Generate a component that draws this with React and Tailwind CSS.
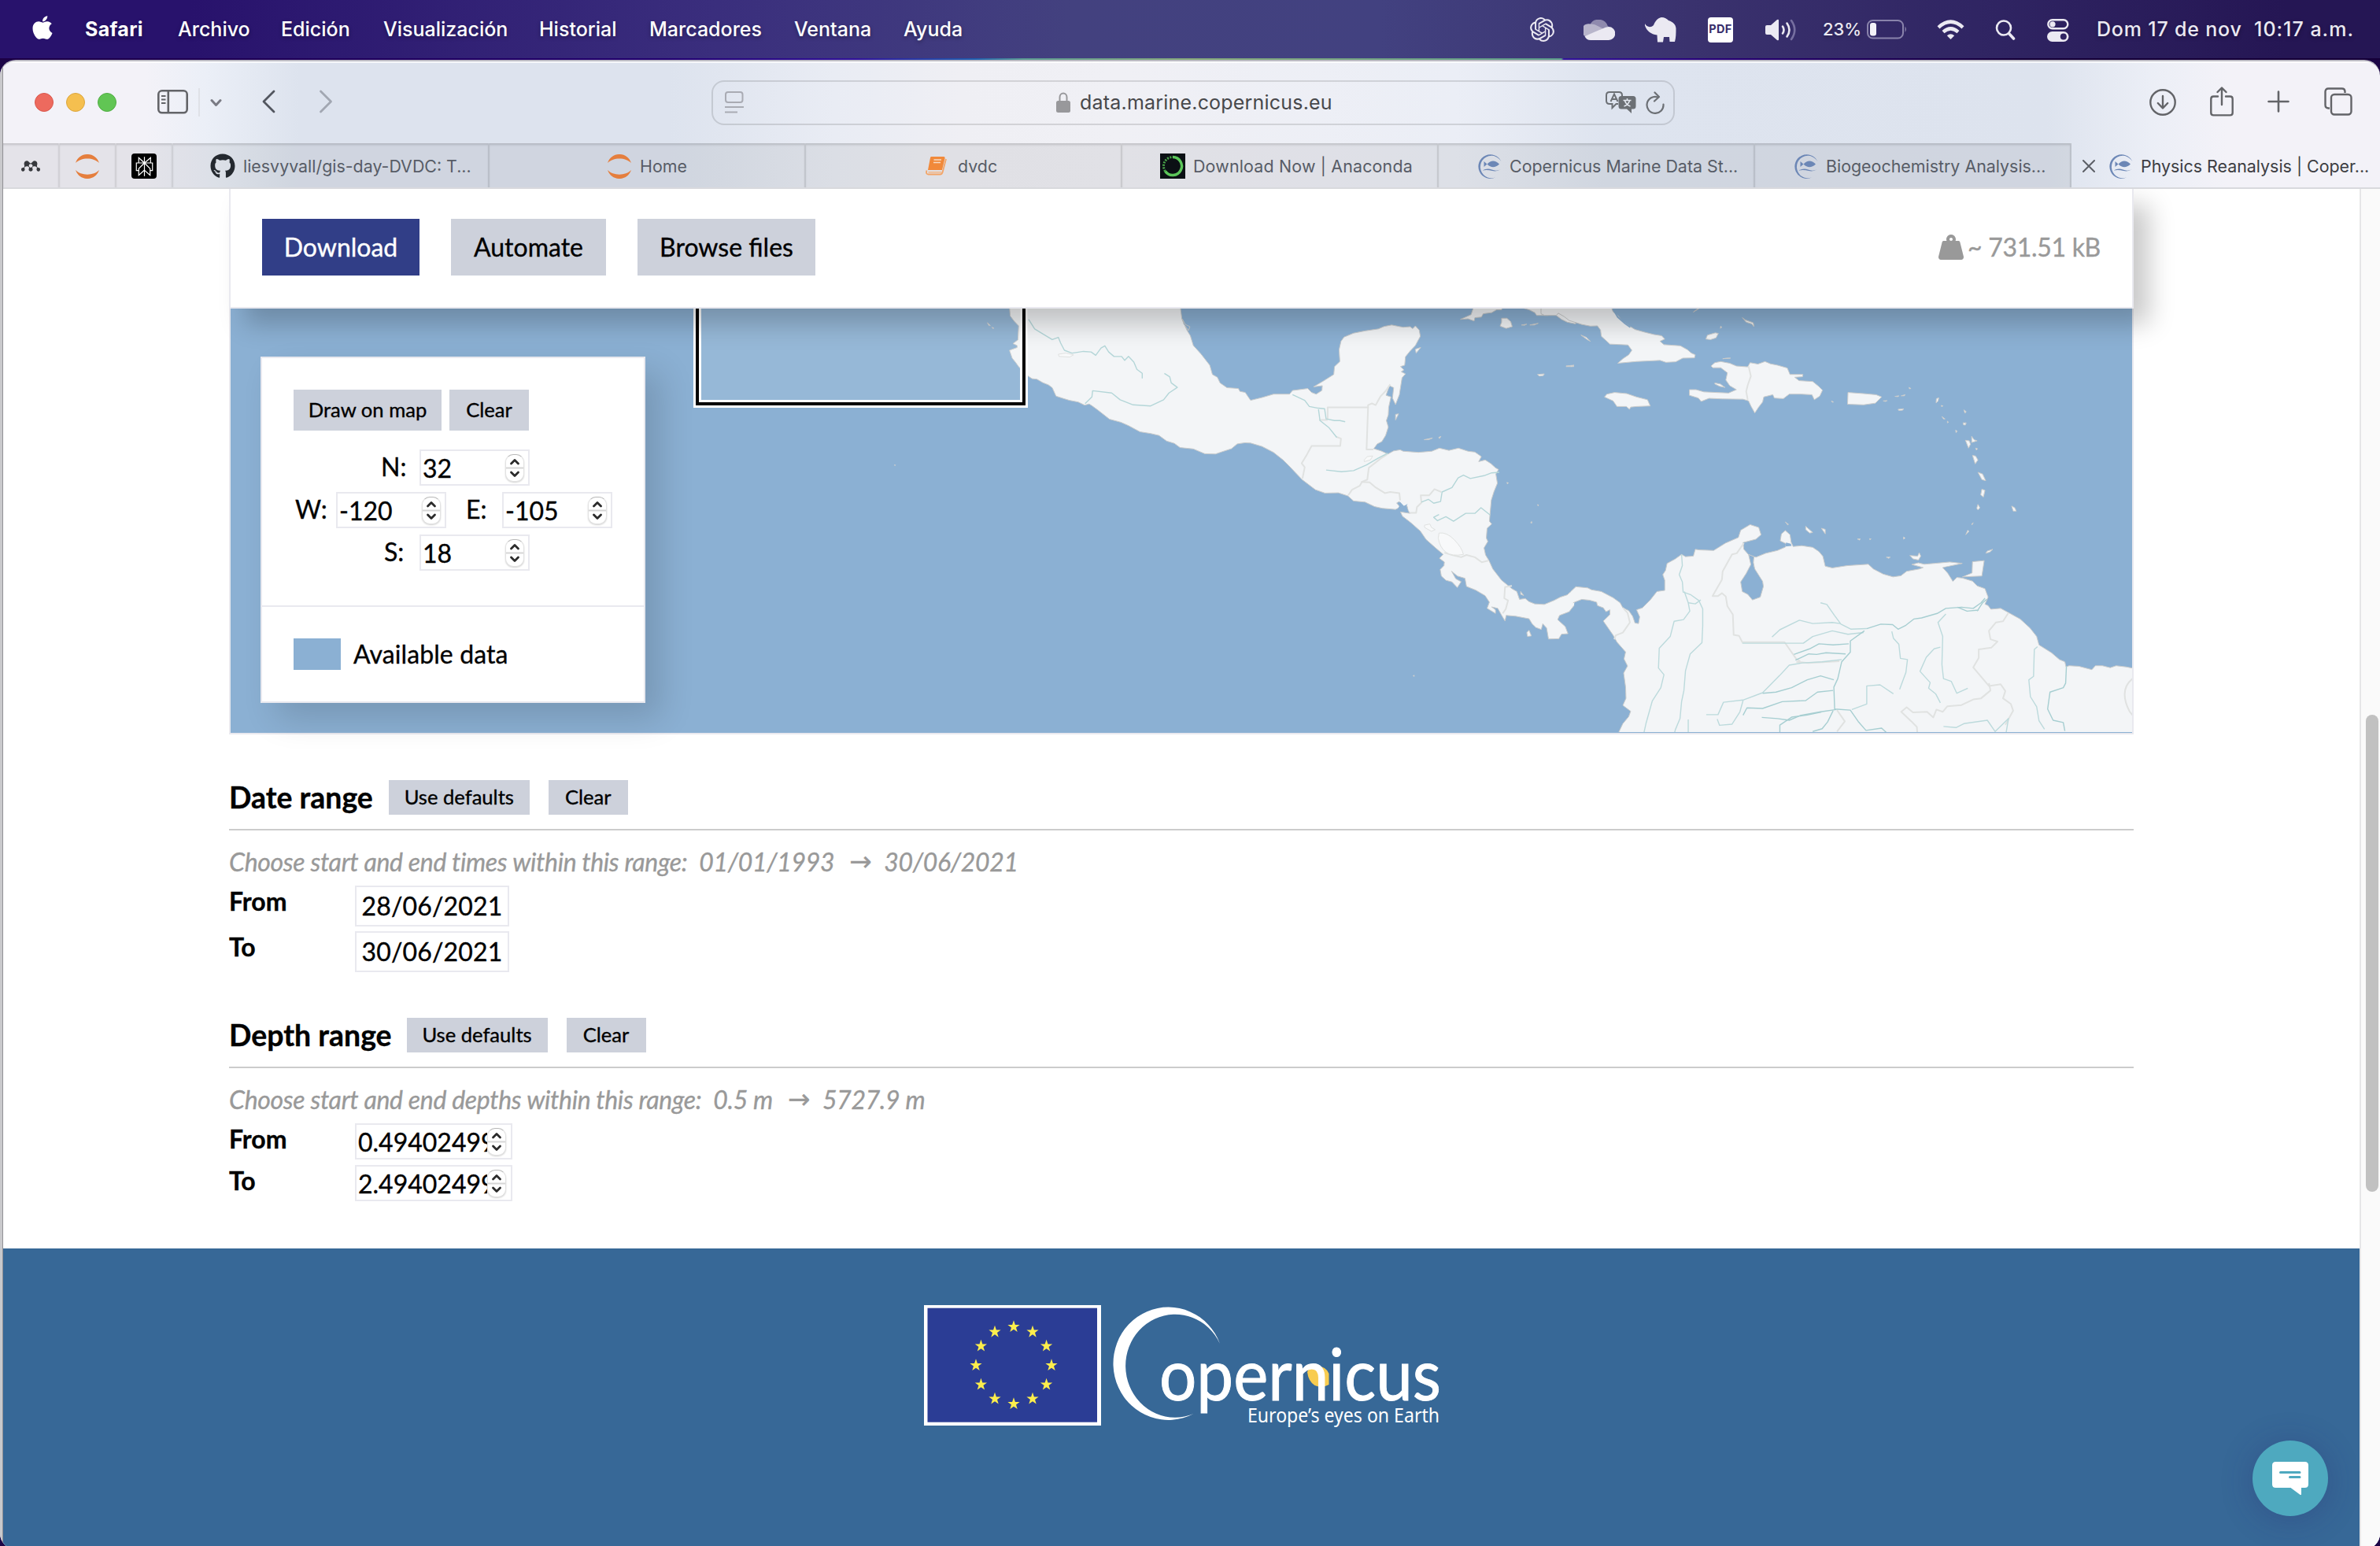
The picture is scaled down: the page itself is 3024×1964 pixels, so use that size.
import { FaApple, FaGithub, FaWeightHanging } from "react-icons/fa";
import { SiOpenai, SiPerplexity, SiMendeley } from "react-icons/si";

/* ---------- macOS menu bar ---------- */

const MENU = [
  ["Archivo", "w-[131px]"],
  ["Edición", "w-[130px]"],
  ["Visualización", "w-[198px]"],
  ["Historial", "w-[140px]"],
  ["Marcadores", "w-[184px]"],
  ["Ventana", "w-[139px]"],
  ["Ayuda", "w-[90px]"],
];

function CloudIcon() {
  return (
    <svg width="40" height="26" viewBox="0 0 40 26">
      <path d="M8 7A12 11.500 0 0 1 30.500 7.500L33 10 24 13z" fill="#8f8aae" />
      <path d="M9 5.500Q14 5 18 8L26 12 2 21A9 8.500 0 0 1 9 5.500z" fill="#b8b5cb" />
      <path d="M1.500 21 24 11.500Q28 9 32 9a8.300 8.500 0 0 1 0 17H9q-5.500 0-7.500-5z" fill="#ebe9f2" />
    </svg>
  );
}

function ElephantIcon() {
  return (
    <svg width="40" height="32" viewBox="0 0 40 32" fill="#ebe9f2">
      <path d="M0 8c2 4 7 6 11 2 2-5 5-9 10-10 4 0 7 2 9 4 6 2 9 5 9.500 10 0 6 0 12-1.500 17h-6.500l-.5-6h-7l-1 6.500h-7l-.5-9c-8-1-13-5-15.500-12z" />
    </svg>
  );
}

function VolumeIcon() {
  return (
    <svg width="39" height="28" viewBox="0 0 39 28" fill="none" strokeLinecap="round">
      <path d="M0 10q0-2 2-2h5l8-7q2-1 2 1v24q0 2-2 1l-8-7H2q-2 0-2-2z" fill="#ebe9f2" />
      <path d="M22 9.500q3 4.500 0 9" stroke="#ebe9f2" strokeWidth="2.600" />
      <path d="M27.500 5.500q6 8.500 0 17" stroke="#ebe9f2" strokeWidth="2.600" />
      <path d="M33 2q8.500 12 0 24" stroke="#766fa0" strokeWidth="2.600" />
    </svg>
  );
}

function BatteryIcon() {
  return (
    <svg width="52" height="26" viewBox="0 0 52 26">
      <rect x="1" y="1" width="45" height="22.500" rx="6.500" fill="none" stroke="#8983ab" strokeWidth="2" />
      <rect x="4" y="4" width="8" height="16.500" rx="3" fill="#f3f2f7" />
      <path d="M48.500 8.500q3 3.500 0 7.500z" fill="#8983ab" />
    </svg>
  );
}

function WifiIcon() {
  return (
    <svg width="35" height="26" viewBox="0 0 35 26" fill="none" stroke="#ebe9f2" strokeWidth="4.400">
      <path d="M2 9.800Q17.500-4.500 33 9.800" />
      <path d="M8 15.600q9.500-8.400 19 0" />
      <path d="M12.800 20.200q4.700-3.700 9.400 0L17.500 25z" fill="#ebe9f2" stroke="none" />
    </svg>
  );
}

function SearchIcon() {
  return (
    <svg width="26" height="28" viewBox="0 0 26 28" fill="none" stroke="#ebe9f2" strokeLinecap="round">
      <circle cx="11" cy="11.500" r="9" strokeWidth="2.600" />
      <path d="M17.500 18.500 23.500 25" strokeWidth="3.600" />
    </svg>
  );
}

function ControlIcon() {
  return (
    <svg width="28" height="30" viewBox="0 0 28 30">
      <rect x="1.300" y="2.300" width="25" height="11" rx="5.500" fill="none" stroke="#ebe9f2" strokeWidth="2.400" />
      <circle cx="7" cy="7.800" r="3.600" fill="#ebe9f2" />
      <rect x="0" y="17" width="27.500" height="13" rx="6.500" fill="#ebe9f2" />
      <circle cx="20.800" cy="23.500" r="4" fill="#2f2462" />
    </svg>
  );
}

function MenuBar() {
  return (
    <header className="h-[74px] pt-px flex items-center bg-[linear-gradient(90deg,#28126c_0%,#28126c_8%,#3a2e7d_30%,#43417f_45%,#424180_58%,#3a326e_71%,#2f2462_84%,#251654_96%)] font-[Inter] text-[25px] font-medium text-white [text-shadow:0_2px_5px_rgba(0,0,0,0.35)]">
      <FaApple className="ml-[39px] w-[30px] h-[34px] -mt-[6px]" />
      <span className="ml-[39px] w-[118px] font-bold tracking-[0.33px]">Safari</span>
      {MENU.map(([label, width]) => (
        <span key={label} className={width}>{label}</span>
      ))}
      <div className="ml-auto flex items-center text-[#ebe9f2]">
        <SiOpenai className="w-[31px] h-[31px]" />
        <div className="ml-[37px]"><CloudIcon /></div>
        <div className="ml-[38px]"><ElephantIcon /></div>
        <div className="ml-[40px] w-8 h-8 rounded-[4px] bg-white text-[#382e6b] text-[14.5px] leading-[30px] font-bold text-center tracking-[0.3px] [text-shadow:none]">PDF</div>
        <div className="ml-[41px]"><VolumeIcon /></div>
        <span className="ml-[34px] w-[49px] text-[22px]">23%</span>
        <div className="ml-[7px]"><BatteryIcon /></div>
        <div className="ml-[37px]"><WifiIcon /></div>
        <div className="ml-[39px]"><SearchIcon /></div>
        <div className="ml-[40px]"><ControlIcon /></div>
        <span className="ml-[35px] w-[200px] tracking-[0.8px] whitespace-nowrap">Dom 17 de nov</span>
        <span className="w-[160px] tracking-[1px] whitespace-nowrap">10:17 a.m.</span>
      </div>
    </header>
  );
}

/* ---------- Safari toolbar ---------- */

function Toolbar() {
  return (
    <div className="h-[102px] pb-[2px] flex items-center text-[#636468]">
      <div className="ml-[40px] flex gap-4">
        <span className="w-6 h-6 rounded-full bg-[#ed6a5e] border border-[#d9574c]" />
        <span className="w-6 h-6 rounded-full bg-[#f5bf4f] border border-[#dba63c]" />
        <span className="w-6 h-6 rounded-full bg-[#61c554] border border-[#50ad43]" />
      </div>
      <svg className="ml-[52px] -mt-[2px]" width="39" height="31" viewBox="0 0 39 31" fill="none" stroke="#636468" strokeWidth="2.600">
        <rect x="1.300" y="1.300" width="36.400" height="28" rx="4.500" />
        <path d="M13.800 1.300v28" />
        <path d="M5 8h5.500M5 12.500h5.500M5 17h5.500" strokeWidth="1.800" />
      </svg>
      <span className="ml-[13px] w-[2px] h-9 bg-[#dfe1e7]" />
      <svg className="ml-[13px]" width="15" height="11" viewBox="0 0 15 11" fill="none" stroke="#7a7b84" strokeWidth="3" strokeLinecap="round" strokeLinejoin="round">
        <path d="M2 2.500 7.500 8.500 13 2.500" />
      </svg>
      <svg className="ml-[51px] -mt-[2px]" width="18" height="30" viewBox="0 0 18 30" fill="none" stroke="#52565f" strokeWidth="2.800" strokeLinecap="round" strokeLinejoin="round">
        <path d="M15 2 2 15l13 13" />
      </svg>
      <svg className="ml-[54px] -mt-[2px]" width="18" height="30" viewBox="0 0 18 30" fill="none" stroke="#a2a7b2" strokeWidth="2.800" strokeLinecap="round" strokeLinejoin="round">
        <path d="M2.500 2 15.500 15l-13 13" />
      </svg>

      <div className="ml-[481px] w-[1224px] h-[57px] rounded-[16px] border-2 border-black/12 flex items-center">
        <svg className="ml-[15px]" width="24" height="28" viewBox="0 0 24 28" fill="none" stroke="#a9abb3" strokeWidth="2">
          <rect x="1" y="1" width="21.500" height="13" rx="3" />
          <path d="M0 20h24M0 26.500h16" />
        </svg>
        <svg className="ml-[397px]" width="18" height="26" viewBox="0 0 18 26">
          <path d="M4.500 12V6.500a4.500 5 0 0 1 9 0V12" fill="none" stroke="#98989b" strokeWidth="2" />
          <rect x="0" y="11" width="18" height="15" rx="2.500" fill="#98989b" />
        </svg>
        <span className="ml-[12px] w-[330px] pt-px font-[Inter] text-[25px] tracking-[0.2px] text-[#47484b] whitespace-nowrap">data.marine.copernicus.eu</span>
        <svg className="ml-[338px]" width="39" height="28" viewBox="0 0 39 28" fill="none">
          <path d="M16 16 l-2.500 0-5 5v-5H5q-4 0-4-4V5q0-4 4-4h12q4 0 4 4v1" stroke="#6c7075" strokeWidth="2" />
          <path d="M6.500 13 11 3.500 15.500 13M8 10h6" stroke="#6c7075" strokeWidth="2" />
          <path d="M20 6h15q3.500 0 3.500 3.500V19q0 3.500-3.500 3.500h-2V28l-6-5.500h-7q-3.500 0-3.500-3.500V9.500Q16.500 6 20 6z" fill="#6c7075" />
          <path d="M22.500 11.500h10M27.500 9v2.500M24.500 12c1 3 3 5.500 7 7M30.500 12c-1 3-3 5.500-7 7" stroke="#e3e8f0" strokeWidth="1.600" />
        </svg>
        <svg className="ml-[12px]" width="25" height="29" viewBox="0 0 25 29" fill="none" stroke="#6c7075" strokeWidth="2.200" strokeLinecap="round" strokeLinejoin="round">
          <path d="M15.500 7.500A10.500 10.500 0 1 0 22.500 16.500" />
          <path d="M11.500 1.500 17 7 11 12.500" />
        </svg>
      </div>

      <div className="ml-auto flex items-center">
        <svg width="34" height="34" viewBox="0 0 34 34" fill="none" stroke="currentColor" strokeWidth="2.400" strokeLinecap="round" strokeLinejoin="round">
          <circle cx="17" cy="17" r="15.700" />
          <path d="M17 9v15M10.800 18l6.200 6.500 6.200-6.500" />
        </svg>
        <svg className="ml-[43px] -mt-[2px]" width="30" height="38" viewBox="0 0 30 38" fill="none" stroke="currentColor" strokeWidth="2.400" strokeLinecap="round" strokeLinejoin="round">
          <path d="M10 12.500H4.500q-3.200 0-3.200 3.200v17.500q0 3.200 3.200 3.200h21q3.200 0 3.200-3.200V15.700q0-3.200-3.200-3.200H20" />
          <path d="M15 23V2M9.500 7 15 1.500 20.500 7" />
        </svg>
        <svg className="ml-[43px] -mt-[3px]" width="28" height="28" viewBox="0 0 28 28" fill="none" stroke="currentColor" strokeWidth="2.600" strokeLinecap="round">
          <path d="M14 1.500v25M1.500 14h25" />
        </svg>
        <svg className="ml-[44px] mr-[35px] -mt-[3px]" width="36" height="36" viewBox="0 0 36 36" fill="none" stroke="currentColor" strokeWidth="2.400">
          <path d="M7 26.500H5.500q-4 0-4-4v-17q0-4 4-4h17q4 0 4 4V7" />
          <rect x="9" y="9" width="25.500" height="25.500" rx="4" />
        </svg>
      </div>
    </div>
  );
}

/* ---------- Safari tabs ---------- */

function JupyterIcon() {
  return (
    <svg width="30" height="31" viewBox="0 0 30 31" fill="#e57e3d">
      <path d="M0 11C5-3.700 25-3.700 30 11 23 3.500 7 3.500 0 11z" />
      <path d="M0 20c5 14.700 25 14.700 30 0-7 7.500-23 7.500-30 0z" />
    </svg>
  );
}

function CopernicusIcon() {
  return (
    <svg width="30" height="31" viewBox="0 0 30 31" fill="#6c87b6">
      <path d="M29.500 9A15.300 15.300 0 1 0 22 29.500 14.300 14.300 0 1 1 20 2Q26 4 29.500 9z" />
      <path d="M11.500 12.500q7.500-8 15.500 0-8 7.500-15.500 0L7.500 16V9z" />
      <path d="M5.500 20.500q6-3.500 12-1t11.500-.5q-5 3.500-11 2t-12.500-.5z" />
    </svg>
  );
}

function BookIcon() {
  return (
    <svg width="28" height="24" viewBox="0 0 28 24">
      <path d="M7 0h16q2 0 1.600 2L21 17H3L6 1.500Q6.200 0 7 0z" fill="#f1893a" />
      <path d="M10.500 4h9.500M10 7.500h9" stroke="#f8dcc4" strokeWidth="1.600" />
      <path d="M1.500 17.500q-1.500 5 2 5h15q2.500 0 3.200-3L26 3" fill="none" stroke="#f3a467" strokeWidth="1.800" />
      <path d="M3.500 19.800h17" stroke="#f4b585" strokeWidth="1.500" />
    </svg>
  );
}

function AnacondaIcon() {
  return (
    <svg width="32" height="32" viewBox="0 0 32 32">
      <rect width="32" height="32" fill="#0b1014" />
      <path d="M16 4.500a11.500 11.500 0 1 1-9.500 18" fill="none" stroke="#5cc65a" strokeWidth="3.400" />
      <path d="M6.500 22.500A11.500 11.500 0 0 1 16 4.500" fill="none" stroke="#4aa64a" strokeWidth="3" strokeDasharray="2 1.500" />
    </svg>
  );
}

const TABS = [
  { label: "liesvyvall/gis-day-DVDC: T...", pad: "pl-[47px]", gap: "gap-[10px]", icon: <FaGithub className="w-8 h-8 text-[#24292f]" /> },
  { label: "Home", pad: "pl-[150px]", gap: "gap-[11px]", icon: <JupyterIcon /> },
  { label: "dvdc", pad: "pl-[152px]", gap: "gap-[13px]", icon: <BookIcon /> },
  { label: "Download Now | Anaconda", pad: "pl-[48px] tracking-[0.18px]", gap: "gap-[10px]", icon: <AnacondaIcon /> },
  { label: "Copernicus Marine Data St...", pad: "pl-[50px]", gap: "gap-[10px]", icon: <CopernicusIcon /> },
  { label: "Biogeochemistry Analysis...", pad: "pl-[50px]", gap: "gap-[10px]", icon: <CopernicusIcon /> },
];

const PINNED = [
  <SiMendeley className="w-[24px] h-[24px] text-[#37393d]" />,
  <JupyterIcon />,
  <span className="w-8 h-8 rounded-[4px] bg-black flex items-center justify-center">
    <SiPerplexity className="w-[25px] h-[25px] text-white" />
  </span>,
];

function TabBar() {
  return (
    <div className="h-[58px] flex border-b-2 border-[#d8d9dd] font-[Inter] text-[21.4px] text-[#575c66]">
      {PINNED.map((icon, i) => (
        <div key={i} className="w-[72px] h-full pt-[2px] flex items-center justify-center border-r-2 border-black/8 bg-black/6 shadow-[inset_0_3px_3px_-1px_rgba(0,0,0,0.15)]">{icon}</div>
      ))}
      {TABS.map((t) => (
        <div key={t.label} className={`w-[402px] h-full pt-[2px] flex items-center border-r-2 border-black/10 bg-black/6 shadow-[inset_0_3px_3px_-1px_rgba(0,0,0,0.15)] whitespace-nowrap ${t.pad} ${t.gap}`}>
          {t.icon}
          <span>{t.label}</span>
        </div>
      ))}
      <div className="flex-1 pt-[2px] flex items-center whitespace-nowrap text-[#3c3d42]">
        <svg className="ml-[14px]" width="16" height="16" viewBox="0 0 16 16" stroke="#5c5f66" strokeWidth="2" strokeLinecap="round">
          <path d="M1 1l14 14M15 1 1 15" />
        </svg>
        <span className="ml-[18px] mr-[10px]"><CopernicusIcon /></span>
        <span>Physics Reanalysis | Coper...</span>
      </div>
    </div>
  );
}

/* ---------- Map ---------- */

const SOUTH_COAST =
  "M88 30L90 60 100 78 112 95 110 145 97 158 108 165 108 172 88 182 95 210 104 225 112 240 135 272 147 283 160 285 175 297 190 305 200 315 210 345 228 353 245 360 268 366 285 377 297 373 305 380 320 395 350 427 380 438 400 450 430 472 458 478 480 485 500 505 520 513 535 528 570 533 600 550 628 551 645 543 670 532 685 515 705 511 720 512 750 524 780 545 805 572 820 592 855 642 890 678 915 690 950 689 975 700 990 718 1020 722 1045 738 1065 744 1100 748 1112 740 1103 725 1110 720 1120 738 1130 735 1133 752 1138 762 1113 757 1118 772 1140 795 1165 825 1180 855 1205 885 1225 908 1215 922 1228 935 1227 948 1217 962 1220 985 1232 1000 1248 1006 1262 1026 1272 1005 1258 995 1247 968 1262 985 1282 993 1286 1022 1310 1035 1335 1055 1346 1078 1340 1100 1362 1118 1362 1105 1352 1095 1368 1100 1377 1122 1387 1145 1390 1125 1415 1128 1450 1137 1458 1155 1468 1168 1482 1175 1486 1155 1496 1170 1501 1209 1528 1208 1535 1192 1552 1190 1545 1165 1525 1140 1530 1125 1555 1112 1568 1090";
const GULF_COAST =
  "M1572 1032L1558 1042 1550 1052 1532 1060 1515 1072 1490 1086 1465 1084 1450 1076 1440 1065 1425 1068 1418 1040 1405 1030 1378 1000 1355 960 1345 930 1336 910 1332 885 1342 862 1338 850 1340 815 1352 800 1346 790 1348 760 1351 715 1358 685 1367 655 1363 622 1370 606 1362 600 1350 585 1335 572 1318 578 1325 560 1308 544 1290 541 1265 530 1240 538 1215 530 1195 541 1160 545 1120 541 1112 536 1095 540 1080 551 1062 540 1043 532 1052 515 1064 507 1074 485 1081 455 1076 432 1081 412 1082 385 1088 348 1075 342 1084 308 1095 315 1092 352 1100 375 1110 340 1117 280 1126 266 1115 258 1122 252 1113 240 1124 235 1126 205 1138 185 1152 165 1165 132 1162 110 1152 95 1145 105 1138 98 1120 100 1090 92 1070 97 1055 106 1020 113 990 121 965 135 957 150 952 180 954 222 940 240 938 268 910 292 885 312 908 308 907 325 892 338 880 332 870 318 830 325 822 338 780 338 750 350 720 360 706 332 692 328 688 318 658 315 640 298 633 278 620 268 613 235 590 195 570 165 562 130 553 110 540 70 536 30";

const WEST_ISLANDS = [
  "M1304 30L1298 55 1270 72 1290 70 1306 78 1308 66 1325 64 1330 52 1352 48 1365 38 1378 38 1380 30z",
  "M1430 30L1450 38 1465 48 1470 58 1500 58 1515 52 1535 72 1550 82 1572 88 1572 30z",
  "M1378 68L1392 68 1402 80 1406 98 1390 104 1374 96 1378 82z",
  "M1152 178L1166 172 1154 192z", "M1472 268l18-2-3 6-10 2z", "M1547 240l20-4 0 4z",
  "M1100 410l8-2-8 22z", "M1175 500l22-6-10 6z", "M1213 492l6-4-4 8z", "M1450 1178l6 20-10 2-2-14z",
  "M1428 1040l8 14-8-4z", "M30 84l8 10-4 0z", "M42 100l5 3-2 2z", "M1392 652l4 2-3 3z", "M1454 795l3-4 0 6z", "M1472 731l3 1-1 4z",
  "M1430 92l14-3-6 4z", "M1452 92l22-6-10 6z", "M1146 1340l3-2 0 4z", "M-214 590l3 0-1 2z",
];
const EAST_COAST =
  "M193 1545L205 1510 220 1485 225 1466 205 1445 213 1420 212 1380 207 1330 217 1305 208 1280 212 1255 190 1220 180 1195 165 1165 155 1145 172 1122 172 1105 162 1112 155 1098 140 1090 138 1078 120 1071 100 1068 78 1080";
const EAST_NORTH_COAST =
  "M72 1040L85 1023 115 1027 125 1034 150 1040 180 1062 198 1080 205 1098 220 1108 230 1128 236 1152 245 1154 248 1130 240 1105 255 1098 275 1070 292 1040 312 1036 312 1000 307 980 314 965 318 940 338 925 355 908 365 916 385 914 390 890 400 892 437 894 467 868 500 848 506 822 530 802 552 812 558 838 545 854 512 866 514 890 528 912 545 918 570 904 600 894 620 882 622 870 607 860 610 835 620 823 632 838 635 865 640 880 662 877 690 883 706 898 716 915 722 950 740 956 778 948 832 943 845 960 870 978 895 988 915 984 930 968 962 960 972 955 943 944 960 938 975 943 1000 940 1040 935 1072 940 1045 948 1022 955 1035 975 1048 1004 1058 990 1072 992 1098 1003 1110 1020 1130 1030 1138 1060 1130 1085 1138 1090 1145 1103 1170 1100 1190 1115 1220 1138 1245 1170 1262 1200 1268 1230 1300 1258 1320 1282 1334 1290 1337 1308 1345 1304 1370 1306 1403 1318 1412 1304 1430 1304 1450 1311 1465 1304 1490 1308 1512 1314";
const EAST_ISLANDS = [
  "M-4 30L-4 52 5 58 35 58 40 50 55 62 68 76 100 90 122 96 140 95 148 110 150 132 172 160 218 163 228 182 220 198 205 212 192 228 240 222 300 218 315 225 340 223 358 210 388 209 390 198 380 192 370 180 352 166 310 162 300 150 312 142 304 130 285 126 262 118 236 108 222 96 205 80 192 58 180 45 176 30z",
  "M430 238L440 226 455 222 478 228 495 238 524 241 530 226 550 231 568 222 582 230 600 235 625 245 632 268 665 268 664 276 644 278 655 290 690 293 705 310 715 324 708 345 694 358 688 340 660 338 630 338 615 354 592 352 588 340 565 348 562 366 552 384 542 405 532 380 526 362 512 356 460 355 425 353 405 364 398 352 375 342 375 322 392 322 412 330 475 334 495 322 478 308 468 288 472 262 455 244 435 244z",
  "M440 298l14 4 12 12-14-4-12-8z",
  "M158 348L164 338 184 332 215 336 240 348 268 358 275 380 240 382 225 384 222 392 214 382 190 382 180 362z",
  "M780 332L820 336 852 340 866 348 850 370 820 376 779 374z",
  "M1098 934L1128 930 1122 985 1072 988 1097 974z",
  "M1132 904l4-8 14-6-8 10z", "M417 142l4-14 20-8 8 2-6 16-14 6z", "M480 210l-20 2 10-2z",
  "M908 392l14-2-2 5-10 1z", "M900 346l10-2-2 3z", "M916 344l10-4-2 4z", "M870 362l10-1-4 3z", "M936 314l5 4-4 1z",
  "M1006 354l6-3-2 12-5 6z", "M1018 378l5 2-4 2z", "M1020 418l8 8-4 0z", "M1034 434l3 4-3 2z", "M1055 466l4 4-3 5z",
  "M1076 394l6 6-3 6z", "M1074 440l8 0-2 8-5-1z", "M1096 488l6 12 8 4-14 6z", "M1080 502l10 2 3 12-5 14z", "M1106 530l5 2-3 5z",
  "M1098 556l8 2 6 14-7 14z", "M1112 616l12 6 8 24-10-4z", "M1122 676l8 4-4 24-7-8z", "M1112 730l5 12-5 8-3-6z",
  "M1100 795l-3 8-1-3z", "M1086 822l3 4-8 12z", "M1198 736l8 6 4 12-8 0z", "M620 793l8 8-2 2z", "M672 808l18 22-8 2-10-12z",
  "M712 815l10 4 0 16z", "M804 853l8 0-3 4z", "M835 852l4 1-3 3z", "M922 846l4 4-4 4z", "M878 918l10 0-4 4z",
  "M938 912l20 2 4-12 4 12-6 14-14-4z", "M738 362l5 4-3 1z", "M510 66l8 8 20 10 2 14-6-10-14-6z", "M455 96l3 4-4 4z",
  "M60 238l20-3-6 5z", "M385 46l14-12 0-3z", "M98 128l14 8 10 14-8-6z",
];

const BORDERS_W = [
  "M922 428V385h106v-8l10-6 10 6 12-30 14-20 12-24",
  "M1028 385l-4 150h18",
  "M900 430h22M945 490l12 6-2 26h-75l-12 30-14 32 8 14-6 40",
  "M1078 552l-18 16-30 32-2 20-2 22-14 8-6 14-20 14-10 20",
  "M1010 650l22 2 14 16 26 22 14-4 24 4 2 26",
  "M1136 760h18l2-20 12-16-2-26 22 0 14-22 18 10",
  "M1228 902l20 8 24 8 14-8 22 8 18 18 18-6",
  "M1405 1020l-18 4-2 40 10 8-6 30-8 16",
];
const RIVERS_W = [
  "M138 72l16 34 22 18 24 20 16-8 6 20 10 26 20 10 30-6 20 2 12 12 14-26 10-8 10 22 14 16 20 0 8 14 10-14 14 20 8 26 14 14v18",
  "M286 372l18-24 2-22 50 8 22 24 34 18 46 4 34-22 14-24 22-20-16-16-4-22-14-12",
  "M830 340l32 20 12 22 24 6 16 2 4 36 22 6 14 0 14 4",
  "M898 392l4 40 24 26 20 34",
  "M918 608l40 6 32-4 34-20 30-24 26-18",
  "M1168 722l18-10 14 14 18-6 4-34 26-16 16-34 14-10 18 12 36-10 20-10 20-2",
  "M1214 766l-14 10 10 12 22-14 20 16 32-28 24 0 16-20 24 26",
];
const BORDERS_E = [
  "M514 868l-18 36-12 4-24 60-2 30-24 58 14 0 10-10 10 12 4 34 14 30 2 72 14 4 8 22h108l30 60 10 8",
  "M526 238l6 36-8 32-4 22 4 30",
  "M1190 1116l-14 30-18 4-18 30 4 30 18 8-16 22-32 6v30l-14 34 40 66 30-6 12 24-6 26 20 20 6 24-20 50",
  "M1140 1366l4 26-24 28-20 4-30 20-36 4-12 20-16-8-8 28-16-20-36 2-16-18-14 16 26 34 14 20 2 36",
  "M205 1098l12 18 6 34-18 36-18 10-4 14",
  "M1507 1350q-36 40-8 116l8 14",
  "M648 1290l30 4 80-6",
  "M752 1462l20 40-20 36",
];
const RIVERS_E = [
  "M355 908l2 40-8 32 8 26 2 36 20 10 20 20 10 30 0 60-2 60-30 40-12 60-4 70-6 40-4 60-12 40-8 44",
  "M362 1040l10 40 4 30-16 30-24 6-10 54-28 42-2 70 14 24-8 46-22 48-16 80-6 38",
  "M372 1545v-50",
  "M372 1080l18 4 14-14",
  "M710 1080l16 6 20 40 16 30 26 18 40-2",
  "M586 1202l20-26 50-34 34 12 50-4 20 4",
  "M510 1224h156l24-24 50-20 40 12 40-6",
  "M764 1282l-50 8-50 4-34 8-24 36-44 62-50 26-50 8-14 44-30 0",
  "M512 1428l-8 40-20 44-32 4-6-22",
  "M892 1182l4 24 14 22 4 50 18 4-4 46-16 60",
  "M790 1460l38-20 0-64 34-4 34 32",
  "M1030 1120l-20 30 12 50-2 100 4 50 20 10 14 42 28-18", "M1016 1238l-16 6-20 30-16 50 26 40-4 20 18 20 12 32",
  "M1264 1236l-8 10-2 96-12 12 4 60 16 36 6 50 14 30",
  "M1024 1520l32 4 20-14 60-12 20 40 34-46-6 50",
];
const MAJOR_RIVERS_E = [
  "M828 1172l36-16 30 2 14 16 20-14 20-22 20-4 40-16 22-18 40-4 30 4 20-20 10-16",
  "M1110 1110l14-30 10-12M1060 1096l24 14 30-4",
  "M822 1180l-36 36 0 40-22 34-10 60-10 30 2 78 40 4 20 40 20 32 40-8 14 18",
  "M642 1264l40-20 24-18 36 4 40-4", "M646 1284l34-22 20 2 24-6 50 4",
  "M562 1402l34-4 40-16 40-28 34-14 34 14",
  "M512 1480l10-26 40 2 50-24 60-4 30-30 40-6",
  "M560 1488l40 4 30 6 30-18 50-12 40-8", "M606 1545v-30l30-28 40-8 36-10", "M690 1538l24-10 14-24 14-40",
  "M1338 1306l-2 60-6 16-34 16-6 60 14 40 26 8 4 30",
];

function Lines({ list, color, width }) {
  return list.map((d) => (
    <path key={d} d={d} fill="none" stroke={color} strokeWidth={width} strokeLinejoin="round" vectorEffect="non-scaling-stroke" />
  ));
}

function Islands({ list }) {
  return list.map((d) => (
    <path key={d} d={d} fill="#f3f5f7" stroke="#c9cbcb" strokeWidth="1" strokeLinejoin="round" vectorEffect="non-scaling-stroke" />
  ));
}

function MapCanvas() {
  return (
    <svg className="block w-full h-full" viewBox="293 392 2416 539" preserveAspectRatio="none">
      <g transform="translate(1240 380) scale(.48469 .35714)">
        <path d={SOUTH_COAST + GULF_COAST.replace("M", "L") + "z"} fill="#f3f5f7" />
        <Lines list={[SOUTH_COAST, GULF_COAST]} color="#c9cbcb" width={1} />
        <path d="M541 70l8 20 12 8-4 14-12-24z" fill="#8bb0d3" stroke="#c9cbcb" vectorEffect="non-scaling-stroke" />
        <Islands list={WEST_ISLANDS} />
        <Lines list={BORDERS_W} color="#e0e2e1" width={2} />
        <Lines list={RIVERS_W} color="#b4d6d8" width={1.4} />
        <g fill="#f8f9fa" stroke="#e0e2e1">
          <path d="M1214 832q20-4 40 24t24 52q-30 8-46-8t-20-50z" vectorEffect="non-scaling-stroke" />
          <path d="M1176 804l14-4 4 12 10 8-10 6-18-14z" vectorEffect="non-scaling-stroke" />
          <path d="M216 196l20-4 20 6-10 8-28-2z" vectorEffect="non-scaling-stroke" />
          <path d="M1018 572l8-12 14-2-6 14-16 6z" vectorEffect="non-scaling-stroke" />
        </g>
        <path d="M1112 722l10 14 10-8-6 12 8 12-16-8-12 2 4-10z" fill="#8bb0d3" />
      </g>
      <g transform="translate(1960 380) scale(.49744 .35714)">
        <path d={EAST_COAST + EAST_NORTH_COAST.replace("M", "L") + "L1512 1545z"} fill="#f3f5f7" />
        <Lines list={[EAST_COAST, EAST_NORTH_COAST]} color="#c9cbcb" width={1} />
        <Islands list={EAST_ISLANDS} />
        <path d="M180 36l12 28 18 22 14 14" fill="none" stroke="#8bb0d3" strokeWidth="2" vectorEffect="non-scaling-stroke" />
        <Lines list={BORDERS_E} color="#e0e2e1" width={2} />
        <Lines list={RIVERS_E} color="#bcdadc" width={1.4} />
        <Lines list={MAJOR_RIVERS_E} color="#a6ced1" width={1.4} />
        <path d="M526 908l14 8q-4 20 2 44l20 44 2 18-8 38-20 10-12-20-14-10-4-34 14-30 12-32z" fill="#8bb0d3" stroke="#c9cbcb" vectorEffect="non-scaling-stroke" />
        <path d="M1028 954l40-8 26-4 0 32-24 14-20-2-14-16z" fill="#8bb0d3" />
        <path d="M622 866l12 4 2 8-16 2z" fill="#8bb0d3" />
      </g>
      <rect x="889" y="380" width="409" height="129" fill="#fff" fillOpacity=".1" />
      <path d="M886 380V513H1301V380" fill="none" stroke="#fff" strokeWidth="10" />
      <path d="M886 380V513H1301V380" fill="none" stroke="#000" strokeWidth="4" />
      <path d="M293 930.500H2709" stroke="#8bb0d3" strokeWidth="1" />
    </svg>
  );
}

/* ---------- Form controls ---------- */

function Stepper() {
  return (
    <span className="shrink-0 w-[24px] h-[35px] rounded-[10px] bg-white border border-[#e2e2e2] border-t-[#b9b9b9] shadow-[0_1px_2px_rgba(0,0,0,0.18)] flex items-center">
      <svg width="22" height="33" viewBox="0 0 22 33" fill="none" stroke="#2b2b2b" strokeWidth="2.800" strokeLinecap="round" strokeLinejoin="round">
        <path d="M6.500 11 11 6.500 15.500 11M6.500 22 11 26.500 15.500 22" />
        <path d="M0 16.500h22" stroke="#d6d6d6" strokeWidth="2" />
      </svg>
    </span>
  );
}

function NumberField({ value }) {
  return (
    <span className="w-[140px] h-[46px] border-2 border-[#e9e9ef] bg-white flex items-center justify-between pl-[2px] pr-[5px]">
      <span className="pt-[1px]">{value}</span>
      <Stepper />
    </span>
  );
}

function SmallButton({ children, size }) {
  return <button className={`${size} bg-[#cdd1db] text-[25.6px] leading-none flex items-center justify-center`}>{children}</button>;
}

function MapCard() {
  return (
    <div className="absolute left-[38px] top-[61px] w-[489px] h-[440px] border-2 border-[#e9e9ef] bg-white shadow-[20px_20px_40px_rgba(0,0,0,0.14)]">
      <div className="h-[314px] pt-[40px] pl-[40px]">
        <div className="flex gap-[10px]">
          <SmallButton size="w-[188px] h-[52px]">Draw on map</SmallButton>
          <SmallButton size="w-[101px] h-[52px]">Clear</SmallButton>
        </div>
        <div className="mt-6 flex flex-col gap-2">
          <div className="flex items-center">
            <span className="w-[160px] pl-[111px] -mt-[3px]">N:</span>
            <NumberField value="32" />
          </div>
          <div className="flex items-center">
            <span className="w-[54px] pl-[2px] -mt-[3px]">W:</span>
            <NumberField value="-120" />
            <span className="w-[71px] pl-[25px] -mt-[3px]">E:</span>
            <NumberField value="-105" />
          </div>
          <div className="flex items-center">
            <span className="w-[160px] pl-[115px] -mt-[3px]">S:</span>
            <NumberField value="18" />
          </div>
        </div>
      </div>
      <div className="h-[122px] border-t-2 border-[#e9e9ef] pl-[40px] flex items-center">
        <span className="w-[60px] h-10 bg-[#8bb0d3]" />
        <span className="ml-4 tracking-[0.1px]">Available data</span>
      </div>
    </div>
  );
}

function SectionHeader({ title, gap }) {
  return (
    <div className="mt-[58px] pb-[18px] border-b-2 border-[#ccc] flex items-center">
      <h3 className="h-11 leading-[43px] text-[37.44px] font-bold">{title}</h3>
      <div className={`flex gap-6 ${gap}`}>
        <SmallButton size="w-[179px] h-[44px]">Use defaults</SmallButton>
        <SmallButton size="w-[101px] h-[44px]">Clear</SmallButton>
      </div>
    </div>
  );
}

function Hint({ text, from, to }) {
  return (
    <p className="mt-[18px] mb-2 h-11 leading-[43px] flex italic text-[#999] whitespace-nowrap tracking-[-0.33px] [font-variant-ligatures:none]">
      <span>{text}</span>
      <span className="ml-[15px]">{from}</span>
      <span className="ml-[19px] w-[28px] not-italic font-['DejaVu_Sans'] text-[34px]">→</span>
      <span className="ml-[16px]">{to}</span>
    </p>
  );
}

function DateRow({ label, value }) {
  return (
    <div className="flex">
      <span className="w-[160px] h-[39px] leading-[39px] font-bold">{label}</span>
      <span className="w-[196px] h-[52px] border-2 border-[#e9e9ef] flex items-center justify-center tracking-[0.15px]">{value}</span>
    </div>
  );
}

function DepthRow({ label, value }) {
  return (
    <div className="flex">
      <span className="w-[160px] h-[39px] leading-[39px] font-bold">{label}</span>
      <span className="w-[200px] h-[46px] border-2 border-[#e9e9ef] flex items-center pl-[2px]">
        <span className="w-[164px] pt-px overflow-hidden">{value}</span>
        <Stepper />
      </span>
    </div>
  );
}

/* ---------- Footer ---------- */

const STAR = "0,-8.2 1.9,-2.5 7.600,-2.5 3,1 4.700,6.600 0,3.200 -4.700,6.600 -3,1 -7.600,-2.5 -1.900,-2.5";

function CopernicusLogo() {
  return (
    <svg width="664" height="164" viewBox="1170 1654 664 164" overflow="visible">
      <rect x="1174" y="1658" width="225" height="153" fill="#fff" />
      <rect x="1178.500" y="1661.700" width="215.500" height="145" fill="#2b3d95" />
      {Array.from({ length: 12 }, (_, i) => {
        const a = (i * Math.PI) / 6;
        return <polygon key={i} points={STAR} fill="#fdee4c" transform={`translate(${1288 + 48 * Math.sin(a)} ${1734.500 - 49 * Math.cos(a)})`} />;
      })}
      <path d="M1550 1707A70 71.700 0 1 0 1516.500 1796A63 65.500 0 1 1 1550 1707z" fill="#fff" />
      <path d="M1661 1743q3-8 12-8 12 1 15.500 10V1759q-9 5-18 1-8-5-9.500-17z" fill="#f8cc50" />
      <text x="1473" y="1778.500" textLength="358" lengthAdjust="spacingAndGlyphs" fontFamily="Lato" fontSize="92" fill="#fff" stroke="#fff" strokeWidth="1">opernicus</text>
      <text x="1585" y="1807" textLength="244" lengthAdjust="spacingAndGlyphs" fontFamily="Noto Sans" fontSize="24.500" fill="#fff">Europe’s eyes on Earth</text>
    </svg>
  );
}

function ChatButton() {
  return (
    <button className="absolute right-[40px] bottom-[42px] w-24 h-24 rounded-full bg-[#4ea9bf] shadow-[0_4px_40px_rgba(40,40,110,0.3)] flex items-center justify-center">
      <svg width="46" height="43" viewBox="0 0 46 43">
        <path d="M4.500 0h37Q46 0 46 4.500v24q0 4.500-4.500 4.500H37v8.500q-1 1-2 0L23.500 33h-19Q0 33 0 28.500v-24Q0 0 4.500 0z" fill="#fff" />
        <path d="M10.500 13.500h24.500M22.500 19.500H35" stroke="#4ea9bf" strokeWidth="3" strokeLinecap="round" />
      </svg>
    </button>
  );
}

/* ---------- Page ---------- */

export default function App() {
  return (
    <div className="w-[3024px] h-[1964px] overflow-hidden bg-[#1c0647]">
      <MenuBar />
      <div className="h-[2px] bg-[linear-gradient(90deg,#1c0045_0%,#230070_28%,#32129c_36%,#1f5fb0_41%,#5a9a92_43%,#86a87a_50%,#5a9a8a_65.600%,#32129c_65.700%,#280078_72%,#150038_85%)]" />
      <div className="h-[1892px] flex flex-col rounded-[20px] overflow-hidden border-t-2 border-t-[#bdbcc4] bg-[linear-gradient(90deg,#f3f2f8_0px,#f3f2f8_185px,#ebeff7_262px,#dde3ee_380px,#dde3ee_850px,#e9ecf4_1060px,#efeff4_1220px,#f0f0f5_1420px,#ebeef6_1850px,#dee4ef_2040px,#dde3ee_2600px,#ebeef6_2730px,#f3f2f8_2830px)]">
        <div className="flex flex-1 min-h-0">
          <div className="w-[3px] bg-[#c9c9cc]" />
          <div className="w-px bg-[#929296]" />
          <div className="flex-1 flex flex-col border-t-2 border-t-white/70">
            <Toolbar />
            <TabBar />

            <div className="flex flex-1 min-h-0 bg-white">
              <main className="relative w-[2994px] overflow-hidden font-[Lato] text-[32px] leading-none text-black [-webkit-text-stroke:0.35px]">
                <div className="ml-[287px] w-[2420px]">
                  <div className="relative z-10 h-[152px] border-2 border-t-0 border-[#e9e9ef] bg-white shadow-[20px_20px_30px_rgba(0,0,0,0.21)] flex items-center pb-[2px] pl-[40px] pr-[40px]">
                    <button className="w-[200px] h-[72px] bg-[#313e87] text-white">Download</button>
                    <button className="ml-[40px] w-[197px] h-[72px] bg-[#cdd1db]">Automate</button>
                    <button className="ml-[40px] w-[226px] h-[72px] bg-[#cdd1db]">Browse files</button>
                    <div className="ml-auto flex items-center text-[#999]">
                      <FaWeightHanging className="w-8 h-8" />
                      <span className="ml-[5px] tracking-[-0.3px]">~ 731.51 kB</span>
                    </div>
                  </div>

                  <div className="relative h-[541px] border-2 border-t-0 border-[#e9e9ef] bg-[#8bb0d3]">
                    <MapCanvas />
                    <MapCard />
                  </div>

                  <SectionHeader title="Date range" gap="ml-[20px]" />
                  <Hint text="Choose start and end times within this range:" from="01/01/1993" to="30/06/2021" />
                  <div className="flex flex-col gap-[6px]">
                    <DateRow label="From" value="28/06/2021" />
                    <DateRow label="To" value="30/06/2021" />
                  </div>

                  <SectionHeader title="Depth range" gap="ml-[19px]" />
                  <Hint text="Choose start and end depths within this range:" from="0.5 m" to="5727.9 m" />
                  <div className="flex flex-col gap-[7px]">
                    <DepthRow label="From" value="0.49402499" />
                    <DepthRow label="To" value="2.49402499" />
                  </div>
                </div>

                <footer className="relative mt-[60px] h-[382px] bg-[#376897] pt-[68px] pl-[1166px]">
                  <CopernicusLogo />
                  <ChatButton />
                </footer>
              </main>

              <div className="w-[26px] border-l-2 border-[#e6e6e8] bg-[#fafafa] pl-[6px] pt-[668px]">
                <div className="w-4 h-[606px] rounded-full bg-[#c1c1c1]" />
              </div>
            </div>
          </div>
        </div>
      </div>
    </div>
  );
}
